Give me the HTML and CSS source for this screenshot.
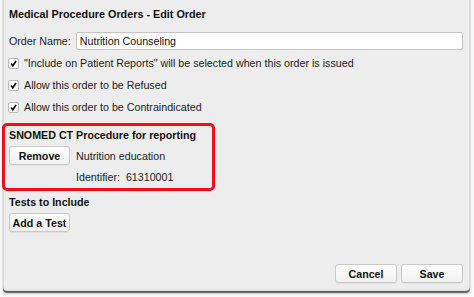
FILE: index.html
```html
<!DOCTYPE html>
<html>
<head>
<meta charset="utf-8">
<link rel="stylesheet" href="styles.css">
</head>
<body>
<div class="dialog">
  <div class="title">Medical Procedure Orders - Edit Order</div>
  <div class="row name-row">
    <span class="label">Order Name:</span>
    <div class="input">Nutrition Counseling</div>
  </div>
  <div class="row check-row"><span class="cb"><svg viewBox="0 0 11 11" width="11" height="11"><path d="M3 5.6 L4.8 7.8 L8 3" fill="none" stroke="#111" stroke-width="1.6"/></svg></span><span>"Include on Patient Reports" will be selected when this order is issued</span></div>
  <div class="row check-row"><span class="cb"><svg viewBox="0 0 11 11" width="11" height="11"><path d="M3 5.6 L4.8 7.8 L8 3" fill="none" stroke="#111" stroke-width="1.6"/></svg></span><span>Allow this order to be Refused</span></div>
  <div class="row check-row"><span class="cb"><svg viewBox="0 0 11 11" width="11" height="11"><path d="M3 5.6 L4.8 7.8 L8 3" fill="none" stroke="#111" stroke-width="1.6"/></svg></span><span>Allow this order to be Contraindicated</span></div>
  <div class="snomed">
    <div class="heading">SNOMED CT Procedure for reporting</div>
    <div class="snomed-grid">
      <button class="btn">Remove</button>
      <span>Nutrition education</span>
      <span></span>
      <span class="ident">Identifier:&nbsp; 61310001</span>
    </div>
  </div>
  <div class="heading tests">Tests to Include</div>
  <button class="btn">Add a Test</button>
  <div class="spacer"></div>
  <div class="footer">
    <button class="btn">Cancel</button>
    <button class="btn">Save</button>
  </div>
</div>
</body>
</html>
```
FILE: styles.css
```css
html, body {
  margin: 0;
  padding: 0;
  background: #f9f9f9;
  width: 474px;
  height: 297px;
  overflow: hidden;
}
body {
  font-family: "Liberation Sans", Arial, sans-serif;
  font-size: 10.7px;
  color: #1c1c1c;
}
.dialog {
  margin: -4px 0 0 3px;
  width: 467px;
  height: 295px;
  box-sizing: border-box;
  background: #ededed;
  border: 1px solid #d8d8d8;
  border-radius: 0 0 4px 4px;
  box-shadow: 0 2px 1px rgba(0,0,0,0.55), 0 3px 3px rgba(0,0,0,0.15);
  padding: 8px 6px 7px 5px;
  display: flex;
  flex-direction: column;
}
.title {
  font-weight: bold;
  font-size: 10.8px;
  color: #111;
  margin-top: 1px;
  height: 26px;
  line-height: 16px;
}
.row {
  display: flex;
  align-items: center;
}
.name-row {
  height: 18px;
  margin-bottom: 2px;
}
.label { margin-right: 5px; }
.input {
  flex: 1;
  height: 18px;
  box-sizing: border-box;
  background: #fff;
  border: 1px solid #c4c4c4;
  border-radius: 2px;
  padding: 0 3px;
  line-height: 16px;
  color: #111;
}
.check-row {
  height: 22px;
  gap: 5px;
}
.cb {
  width: 11px;
  height: 11px;
  box-sizing: border-box;
  background: #fff;
  border: 1px solid #bbb;
  border-radius: 2px;
  display: flex;
  align-items: center;
  justify-content: center;
  margin-left: -1px;
}
.cb svg { display: block; flex: none; }
.snomed {
  margin: 5px 0 0 -7px;
  width: 213px;
  height: 68px;
  box-sizing: border-box;
  border: 3px solid #ee1111;
  border-radius: 5px;
  padding: 2px 4px 0 4px;
}
.heading {
  font-weight: bold;
  color: #111;
  line-height: 15px;
  height: 16px;
}
.snomed-grid {
  display: grid;
  grid-template-columns: 61px auto;
  column-gap: 6px;
  align-items: center;
  grid-auto-rows: 21px;
  margin-top: 1px;
}
.btn {
  font-family: inherit;
  font-size: 10.7px;
  font-weight: bold;
  color: #111;
  background: linear-gradient(#fdfdfd, #f1f1f1);
  border: 1px solid #c9c9c9;
  border-radius: 3px;
  height: 19px;
  width: 61px;
  padding: 0;
  box-shadow: 0 1px 0 rgba(0,0,0,0.05);
}
.tests { margin-top: 4px; margin-bottom: 2px; }
.tests + .btn { align-self: flex-start; }
.spacer { flex: 1; }
.footer {
  display: flex;
  justify-content: flex-end;
  gap: 4px;
  margin-bottom: 0;
}
.footer .btn { width: 62px; }
```
